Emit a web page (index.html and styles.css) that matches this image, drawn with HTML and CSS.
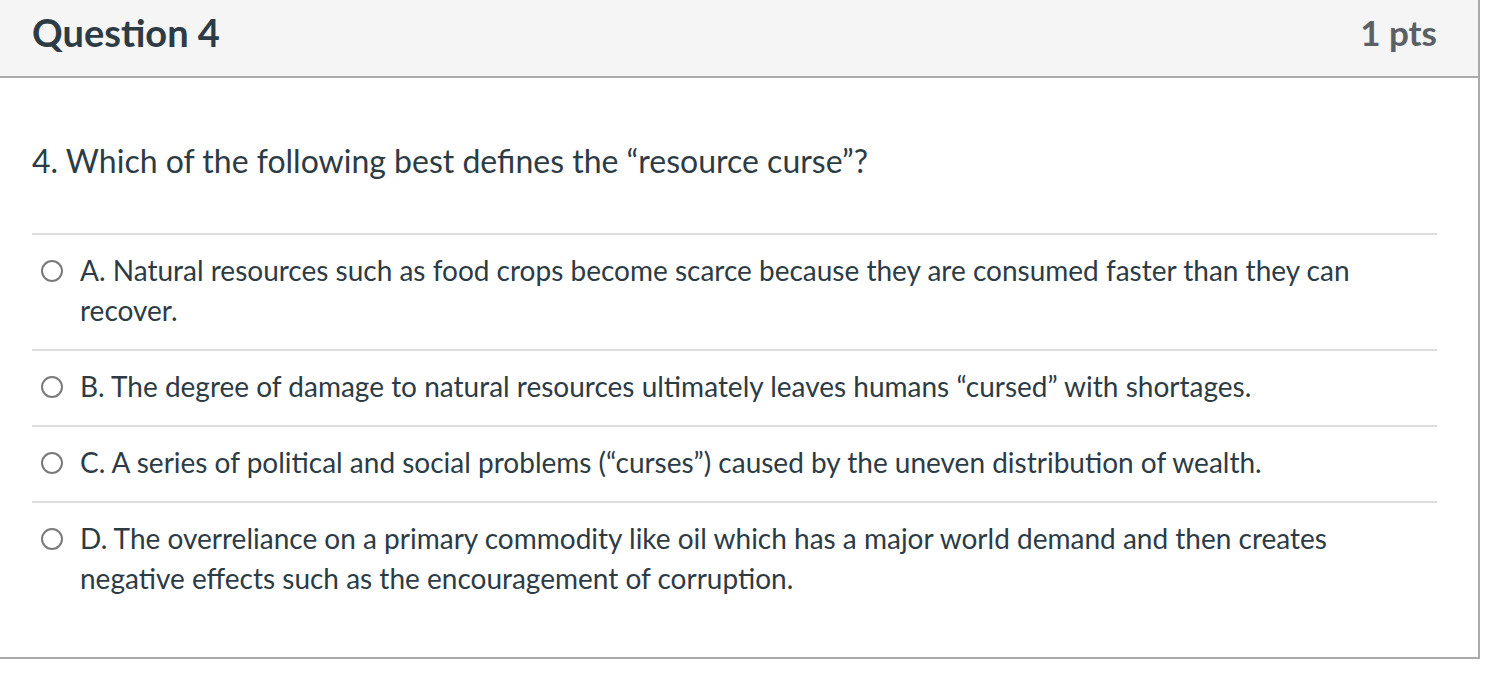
FILE: index.html
```html
<!DOCTYPE html>
<html lang="en">
<head>
<meta charset="utf-8">
<title>Question 4</title>
<link rel="stylesheet" href="styles.css">
</head>
<body>
<div class="question">
  <div class="header">
    <h2 class="title">Question 4</h2>
    <span class="points">1 pts</span>
  </div>
  <div class="content">
    <div class="question-text">4. Which of the following best defines the “resource curse”?</div>
    <div class="answers">
      <label class="answer"><span class="radio"></span><span class="answer-text">A. Natural resources such as food crops become scarce because they are consumed faster than they can recover.</span></label>
      <label class="answer"><span class="radio"></span><span class="answer-text">B. The degree of damage to natural resources ultimately leaves humans “cursed” with shortages.</span></label>
      <label class="answer"><span class="radio"></span><span class="answer-text">C. A series of political and social problems (“curses”) caused by the uneven distribution of wealth.</span></label>
      <label class="answer"><span class="radio"></span><span class="answer-text">D. The overreliance on a primary commodity like oil which has a major world demand and then creates negative effects such as the encouragement of corruption.</span></label>
    </div>
  </div>
</div>
</body>
</html>
```
FILE: styles.css
```css
html, body {
  margin: 0;
  padding: 0;
  background: #ffffff;
}
body {
  font-family: Lato, "Open Sans", "Liberation Sans", sans-serif;
  color: #2d3b45;
}
.question {
  width: 1478px;
  border-right: 2px solid #aaaaaa;
  border-bottom: 2px solid #aaaaaa;
}
.header {
  height: 76px;
  box-sizing: content-box;
  background: #f5f5f5;
  border-bottom: 2px solid #aaaaaa;
  display: flex;
  align-items: center;
  justify-content: space-between;
  padding: 0 41px 0 32px;
}
.header > * {
  position: relative;
  top: -6px;
}
.title {
  margin: 0;
  font-size: 38px;
  font-weight: 700;
  color: #2d3b45;
}
.points {
  font-size: 35px;
  font-weight: 700;
  color: #5b6065;
}
.content {
  padding: 0 41px 40px 32px;
}
.question-text {
  font-size: 32px;
  line-height: 40px;
  padding: 63px 0 52px;
}
.answer {
  display: flex;
  align-items: flex-start;
  border-top: 2px solid #dddddd;
  padding: 15px 0 19px;
  font-size: 28px;
  line-height: 40px;
}
.radio {
  flex: none;
  width: 22px;
  height: 22px;
  box-sizing: border-box;
  border: 2px solid #7a7a7a;
  border-radius: 50%;
  margin: 10px 17px 0 9px;
}
.answer-text {
  flex: 1;
  padding-right: 30px;
}
```
